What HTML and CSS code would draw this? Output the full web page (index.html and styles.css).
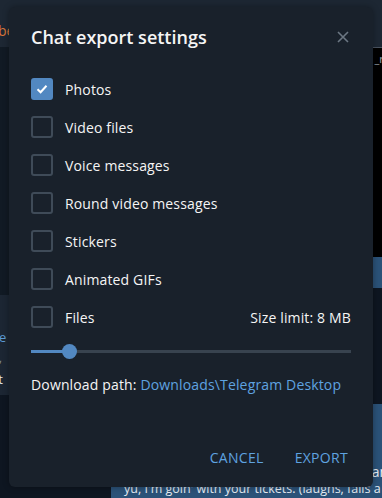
FILE: index.html
```html
<!DOCTYPE html>
<html lang="en">
<head><meta charset="UTF-8"/><meta name="viewport" content="width=device-width, initial-scale=1.0"/>
<title>Chat export settings</title>
<link rel="stylesheet" href="styles.css">
</head><body>
<div class="app">
 <div class="side">
  <div class="side-head"><span class="peer">be</span></div>
  <div class="side-list"></div>
  <div class="side-item">
   <div class="si-link">ne</div>
   <div class="si-grey">o,</div>
   <div class="si-white">et</div>
  </div>
  <div class="side-rest"></div>
 </div>
 <div class="chat">
  <div class="chat-head"></div>
  <div class="chat-code"><span>_re</span></div>
  <div class="chat-blue"></div>
  <div class="chat-gap"></div>
  <div class="chat-msg">
   <div class="msg-line msg-a">an</div>
   <div class="msg-line msg-b">yu, I'm goin' with your tickets. (laughs, falls a</div>
  </div>
 </div>
</div>

<div class="box">
 <div class="box-head">
  <h1>Chat export settings</h1>
  <svg class="close" width="12" height="12" viewBox="0 0 12 12"><path d="M1 1L11 11M11 1L1 11" stroke="#6c7783" stroke-width="1.6" fill="none"/></svg>
 </div>
 <div class="opts">
  <label class="opt"><span class="cb on"><svg width="12" height="10" viewBox="0 0 12 10"><path d="M1.5 5.2L4.6 8.2L10.5 1.8" stroke="#fff" stroke-width="2" fill="none"/></svg></span>Photos</label>
  <label class="opt"><span class="cb"></span>Video files</label>
  <label class="opt"><span class="cb"></span>Voice messages</label>
  <label class="opt"><span class="cb"></span>Round video messages</label>
  <label class="opt"><span class="cb"></span>Stickers</label>
  <label class="opt"><span class="cb"></span>Animated GIFs</label>
  <label class="opt"><span class="cb"></span>Files<span class="limit">Size limit: 8 MB</span></label>
 </div>
 <div class="slider"><div class="fill" style="width:38px"></div><div class="thumb"></div></div>
 <div class="path">Download path: <a href="#">Downloads\Telegram Desktop</a></div>
 <div class="btns">
  <button>CANCEL</button>
  <button>EXPORT</button>
 </div>
</div>
</body></html>
```
FILE: styles.css
```css
body{margin:0;font-family:"Open Sans",sans-serif;background:#0e1621;}
.app{position:relative;width:382px;height:498px;overflow:hidden;display:flex;}
.side{flex:none;width:111px;display:flex;flex-direction:column;}
.side-head{height:47px;background:#1d2733;color:#d9773a;font-size:14px;line-height:47px;}
.peer{margin-left:-2px;position:relative;top:7px;}
.side-list{height:248px;background:#111a24;}
.side-item{height:100px;background:#1c2633;font-size:13px;padding-top:33px;box-sizing:border-box;}
.side-item div{height:20px;margin-left:-9px;}
.si-link{color:#5d9bd6;}
.si-grey{color:#7d8a96;}
.si-white{color:#e3e7ea;margin-top:2px;}
.side-rest{flex:1;background:#0e1621;}
.chat{flex:1;min-width:0;display:flex;flex-direction:column;}
.chat-head{height:47px;background:#1d2733;}
.chat-code{height:209px;background:#000;border-top:1px solid #4a5360;color:#9aa3ab;font-size:11px;text-align:right;}
.chat-code span{display:block;padding-top:3px;margin-right:-8px;}
.chat-blue{height:31px;background:#2b5278;}
.chat-gap{height:116px;background:#0e1621;}
.chat-msg{flex:1;background:#2b5278;color:#e6ecf2;font-size:12.5px;}
.msg-line{white-space:nowrap;}
.msg-a{text-align:right;margin-top:58px;margin-right:-6px;font-size:14px;}
.msg-b{padding-left:13px;margin-top:-1px;}

.box{position:absolute;left:9px;top:7px;width:364px;height:480px;background:#19212b;border-radius:6px;box-shadow:0 0 6px rgba(0,0,0,.35);color:#f5f5f5;display:flex;flex-direction:column;padding:0 22px;box-sizing:border-box;}
.box-head{display:flex;align-items:center;justify-content:space-between;height:60px;}
.box-head h1{margin:0;font-size:18px;font-weight:600;line-height:24px;color:#f5f5f5;}
.close{margin-right:2px;}
.opts{display:flex;flex-direction:column;margin-top:3px;}
.opt{display:flex;align-items:center;height:38px;font-size:14px;letter-spacing:.15px;}
.cb{width:22px;height:22px;box-sizing:border-box;border:2px solid #3f4b58;border-radius:3px;margin-right:12px;display:flex;align-items:center;justify-content:center;}
.cb.on{background:#5288c1;border-color:#5288c1;}
.limit{margin-left:auto;}
.slider{position:relative;height:3px;background:#38434f;margin-top:14px;}
.fill{height:3px;background:#5288c1;}
.thumb{position:absolute;left:31px;top:-6px;width:15px;height:15px;border-radius:50%;background:#5288c1;}
.path{font-size:14px;margin-top:22px;letter-spacing:.15px;}
.path a{color:#5fa3e0;text-decoration:none;}
.btns{display:flex;justify-content:flex-end;margin-top:auto;margin-bottom:14px;margin-right:-9px;}
.btns button{background:none;border:none;color:#5fa3e0;font-family:"Open Sans",sans-serif;font-size:14px;letter-spacing:.3px;padding:6px 12px;margin-left:7px;}
```
